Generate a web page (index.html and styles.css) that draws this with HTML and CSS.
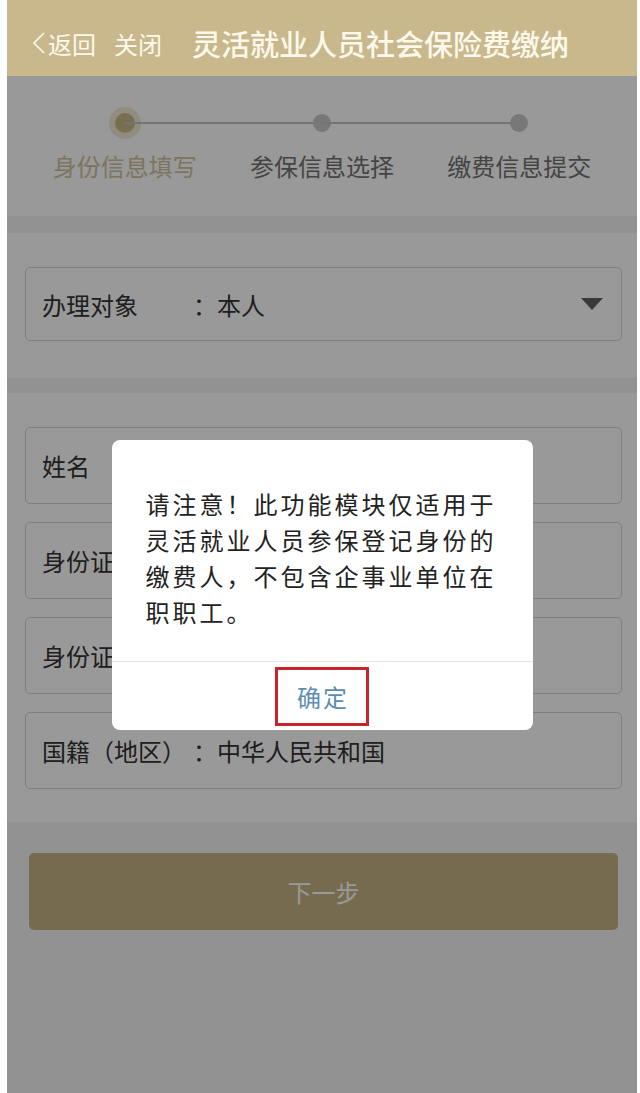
FILE: index.html
```html
<!DOCTYPE html>
<html lang="zh-CN">

<head>
    <meta charset="UTF-8">
    <title>灵活就业人员社会保险费缴纳</title>
    <link rel="stylesheet" href="styles.css">
</head>

<body>

    <!--app nav bar, stays above the modal mask-->
    <header class="navbar">
        <div class="nav_left">
            <a class="nav_back" href="#">
                <svg width="12" height="22" viewBox="0 0 12 22">
                    <polyline points="11,1 1,11 11,21" fill="none" stroke="#fdf8ec" stroke-width="1.6" />
                </svg>返回
            </a>
            <a class="nav_close" href="#">关闭</a>
        </div>
        <h1 class="nav_title">灵活就业人员社会保险费缴纳</h1>
    </header>

    <main class="webview">

        <!--step indicator-->
        <section class="steps">
            <div class="step step_active">
                <span class="step_dot"></span>
                <span class="step_label">身份信息填写</span>
            </div>
            <div class="step">
                <span class="step_dot"></span>
                <span class="step_label">参保信息选择</span>
            </div>
            <div class="step">
                <span class="step_dot"></span>
                <span class="step_label">缴费信息提交</span>
            </div>
        </section>

        <section class="panel panel_select">
            <div class="field field_select">
                <span class="field_label">办理对象</span>
                <span class="field_colon">：</span>
                <span class="field_value">本人</span>
                <span class="caret"></span>
            </div>
        </section>

        <!--values of the first three rows are hidden behind the dialog-->
        <section class="panel panel_form">
            <div class="field">
                <span class="field_label">姓名</span>
            </div>
            <div class="field">
                <span class="field_label">身份证件类型</span>
            </div>
            <div class="field">
                <span class="field_label">身份证件号码</span>
            </div>
            <div class="field">
                <span class="field_label">国籍（地区）</span>
                <span class="field_colon">：</span>
                <span class="field_value">中华人民共和国</span>
            </div>
        </section>

        <div class="actions">
            <button class="btn_next" type="button">下一步</button>
        </div>

        <!--modal mask with the notice dialog-->
        <div class="mask">
            <div class="dialog">
                <p class="dialog_text">请注意！此功能模块仅适用于灵活就业人员参保登记身份的缴费人，不包含企事业单位在职职工。</p>
                <div class="dialog_footer">
                    <button class="dialog_ok" type="button">确定</button>
                </div>
            </div>
        </div>

    </main>

</body>

</html>
```

FILE: styles.css
```css
* {
    margin: 0px;
    padding: 0px;
    box-sizing: border-box;
}

html {
    background-color: white;
}

body {
    margin: 0 3px 0 7px;
    height: 100vh;
    display: flex;
    flex-direction: column;
    font-family: "Noto Sans CJK SC", "Noto Sans", sans-serif;
}

/*nav bar*/
.navbar {
    height: 76px;
    flex-shrink: 0;
    background-color: #c8b88c;
    color: #fdf8ec;
    display: flex;
    align-items: center;
    padding: 10px 0 0 26px;
}

.nav_left {
    display: flex;
    align-items: center;
    gap: 18px;
    font-size: 24px;
}

.nav_left a {
    color: inherit;
    text-decoration: none;
}

.nav_back {
    display: flex;
    align-items: center;
    gap: 3px;
}

.nav_title {
    margin-left: 30px;
    font-size: 29px;
    font-weight: 500;
}

/*page under the mask*/
.webview {
    flex: 1;
    position: relative;
    background-color: #f3f3f3;
}

.steps {
    height: 140px;
    background-color: white;
    display: grid;
    grid-template-columns: repeat(3, 1fr);
    padding: 0 19px;
}

.step {
    position: relative;
    display: flex;
    flex-direction: column;
    align-items: center;
    padding-top: 38px;
}

/*line from previous dot to this one*/
.step+.step::before {
    content: "";
    position: absolute;
    top: 46px;
    left: -50%;
    width: 100%;
    height: 2px;
    background-color: #c2c2c2;
}

.step_dot {
    position: relative;
    width: 18px;
    height: 18px;
    border-radius: 50%;
    background-color: #c8c8c8;
}

.step_active .step_dot {
    width: 20px;
    height: 20px;
    margin-top: -1px;
    margin-bottom: -1px;
    background-color: #c8b785;
    box-shadow: 0 0 0 6px rgba(230, 216, 176, 0.55);
}

.step_label {
    margin-top: 19px;
    font-size: 24px;
    line-height: 30px;
    color: #727272;
}

.step_active .step_label {
    color: #d0c29e;
}

.panel {
    background-color: white;
    margin-top: 17px;
    padding: 34px 15px 37px 18px;
}

.panel_form {
    margin-top: 15px;
    padding-bottom: 33px;
    display: flex;
    flex-direction: column;
    gap: 18px;
}

.field {
    height: 77px;
    border: 1px solid #d4d4d4;
    border-radius: 5px;
    background-color: white;
    display: flex;
    align-items: center;
    padding: 0 18px 0 16px;
    font-size: 24px;
    color: #333333;
}

.field_select {
    height: 74px;
}

.field_label {
    width: 144px;
    flex-shrink: 0;
}

.field_colon {
    margin-left: 7px;
}

.caret {
    margin-left: auto;
    width: 0;
    height: 0;
    border-left: 11px solid transparent;
    border-right: 11px solid transparent;
    border-top: 12px solid #5f5f5f;
}

.actions {
    padding: 31px 19px 0 22px;
}

.btn_next {
    width: 100%;
    height: 77px;
    border: none;
    border-radius: 5px;
    background-color: #c5b184;
    color: white;
    font-family: inherit;
    font-size: 24px;
}

/*modal*/
.mask {
    position: absolute;
    top: 0;
    left: 0;
    right: 0;
    bottom: 0;
    background-color: rgba(0, 0, 0, 0.4);
    display: flex;
    justify-content: center;
    align-items: center;
}

.dialog {
    width: 421px;
    background-color: white;
    border-radius: 8px;
    overflow: hidden;
}

.dialog_text {
    padding: 46px 34px 31px;
    font-size: 24px;
    line-height: 36px;
    letter-spacing: 3px;
    color: #222222;
}

.dialog_footer {
    height: 69px;
    border-top: 1px solid #e6e6e6;
    display: flex;
    justify-content: center;
    align-items: center;
    padding-top: 2px;
}

/*red highlight around the confirm button*/
.dialog_ok {
    width: 94px;
    height: 59px;
    border: 3px solid #c8242c;
    background: none;
    font-family: inherit;
    font-size: 24px;
    letter-spacing: 2px;
    padding-left: 2px;
    color: #5b8db3;
}
```
